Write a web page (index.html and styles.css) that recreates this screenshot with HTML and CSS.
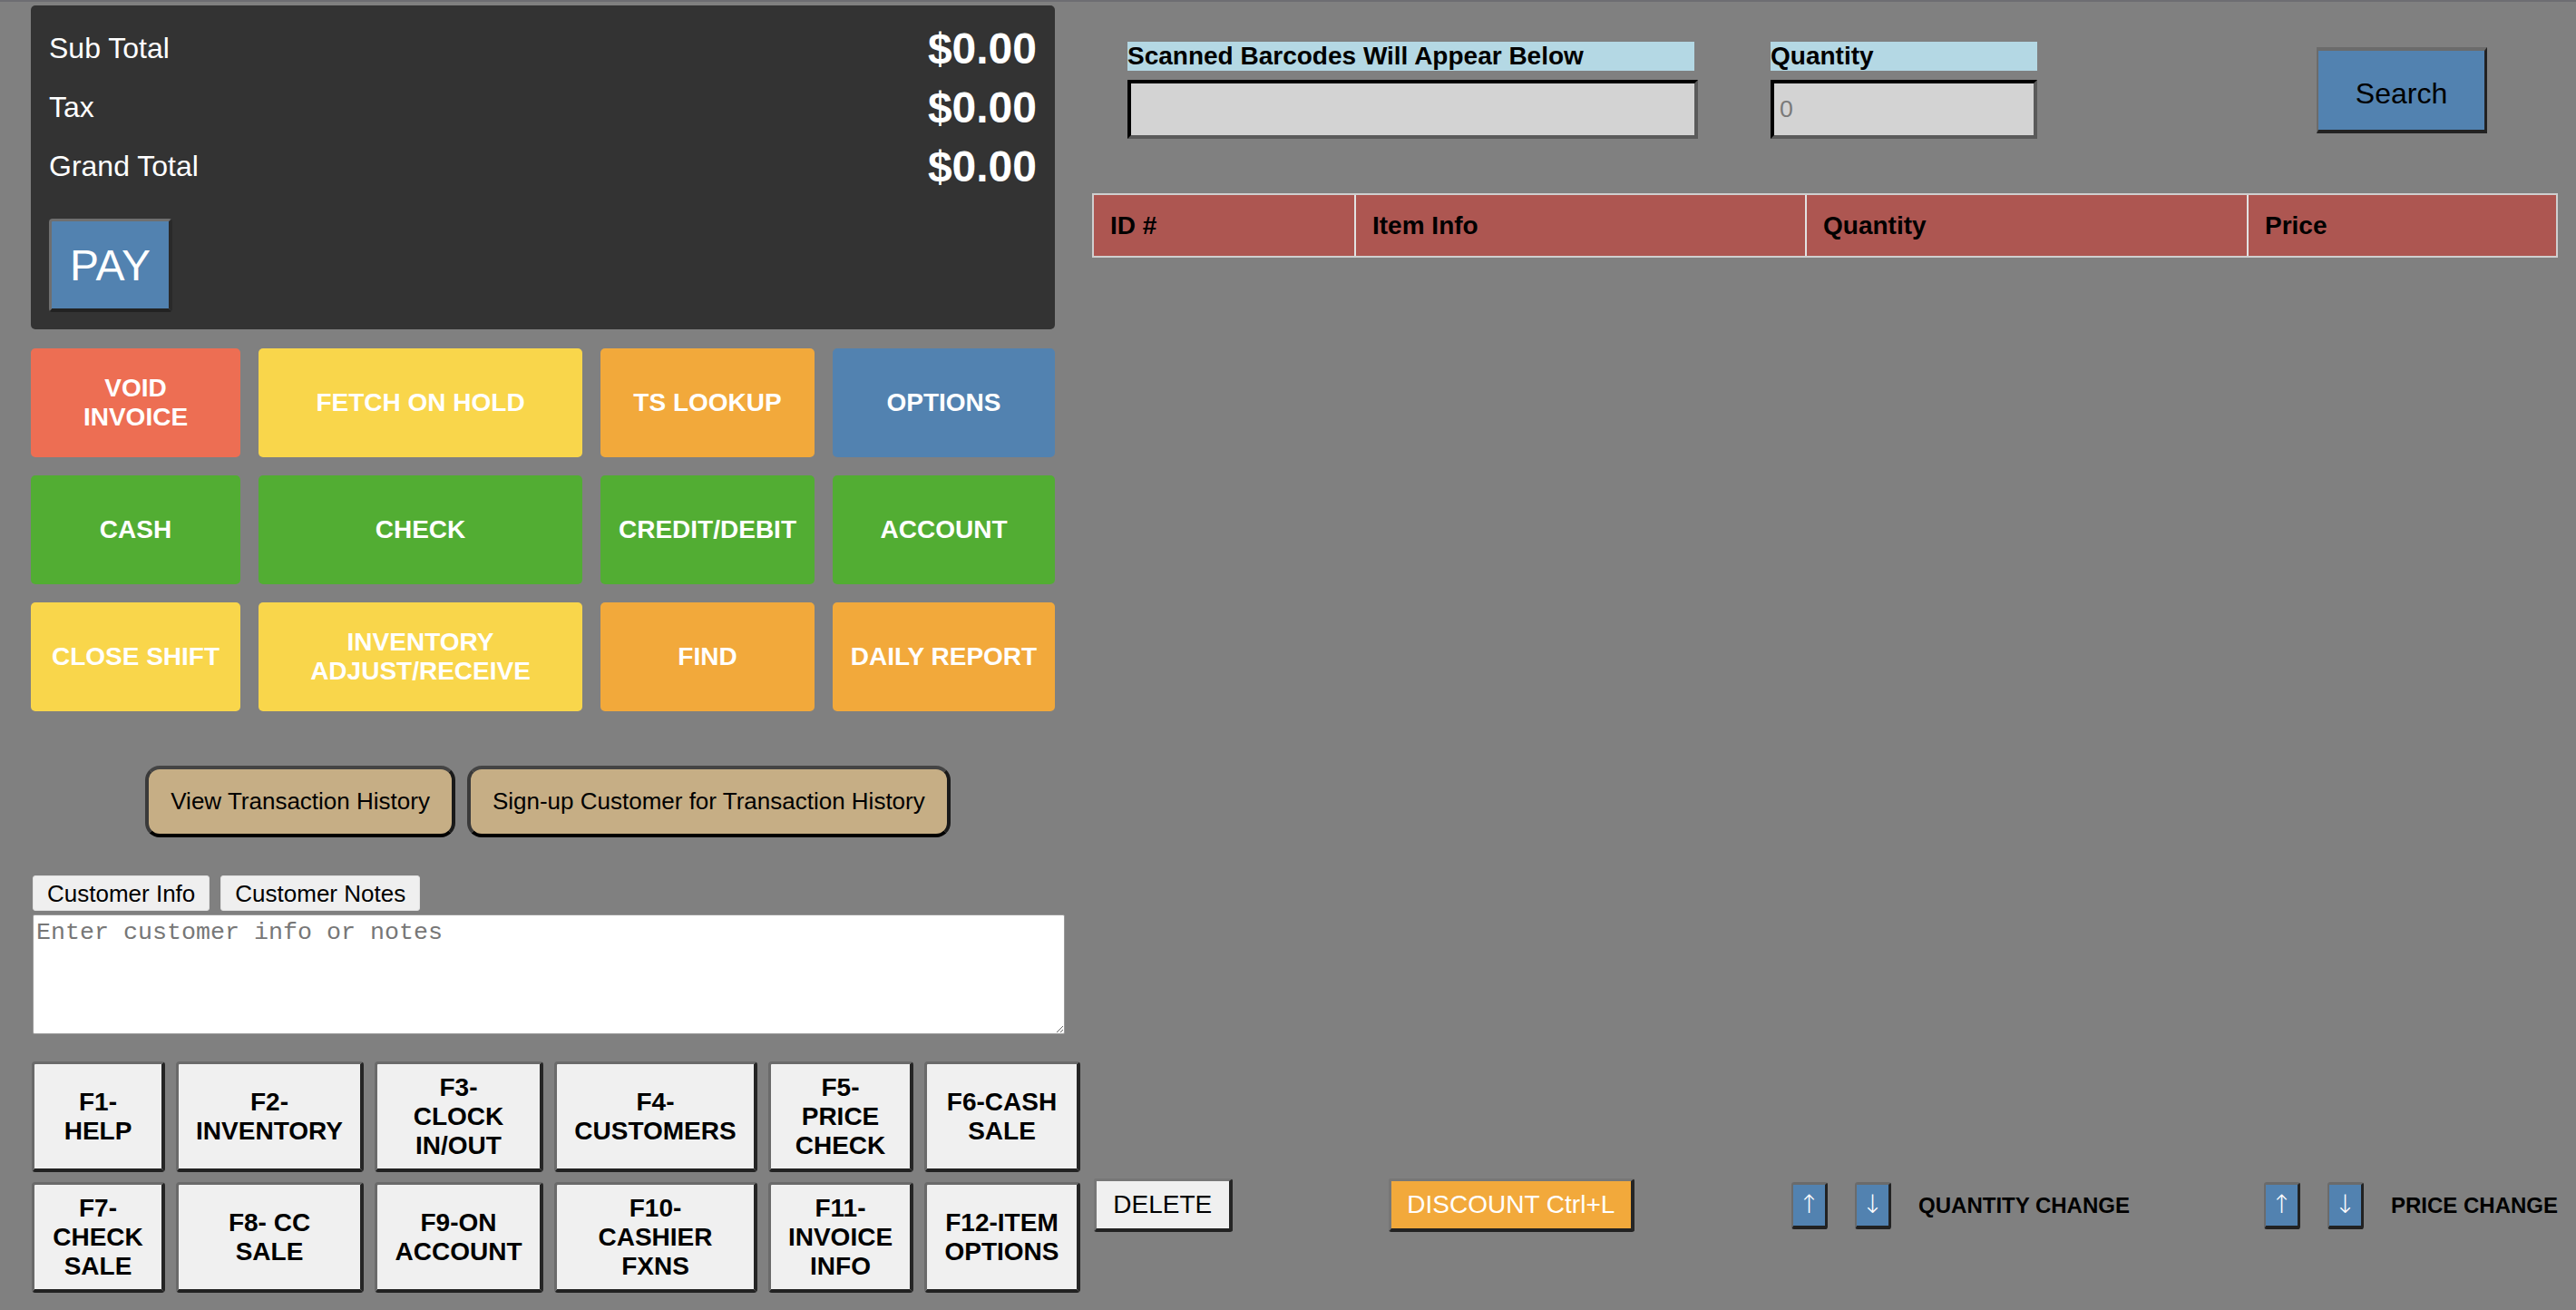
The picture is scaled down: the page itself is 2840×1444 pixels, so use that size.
FILE: index.html
```html
<!DOCTYPE html>
<html lang="en">
<head>
<meta charset="utf-8">
<title>Point of Sale</title>
<link rel="stylesheet" href="styles.css">
</head>
<body>
<div class="app">
  <div class="left">
    <section class="totals">
      <div class="total-row"><span class="total-label">Sub Total</span><span class="total-value">$0.00</span></div>
      <div class="total-row"><span class="total-label">Tax</span><span class="total-value">$0.00</span></div>
      <div class="total-row"><span class="total-label">Grand Total</span><span class="total-value">$0.00</span></div>
      <button class="pay-btn">PAY</button>
    </section>

    <div class="action-grid">
      <button class="tile tile-red">VOID<br>INVOICE</button>
      <button class="tile tile-yellow">FETCH ON HOLD</button>
      <button class="tile tile-orange">TS LOOKUP</button>
      <button class="tile tile-blue">OPTIONS</button>
      <button class="tile tile-green">CASH</button>
      <button class="tile tile-green">CHECK</button>
      <button class="tile tile-green">CREDIT/DEBIT</button>
      <button class="tile tile-green">ACCOUNT</button>
      <button class="tile tile-yellow">CLOSE SHIFT</button>
      <button class="tile tile-yellow">INVENTORY<br>ADJUST/RECEIVE</button>
      <button class="tile tile-orange">FIND</button>
      <button class="tile tile-orange">DAILY REPORT</button>
    </div>

    <div class="history-row">
      <button class="history-btn">View Transaction History</button>
      <button class="history-btn">Sign-up Customer for Transaction History</button>
    </div>

    <div class="tabs">
      <button class="tab">Customer Info</button>
      <button class="tab">Customer Notes</button>
    </div>
    <textarea class="notes" placeholder="Enter customer info or notes"></textarea>

    <div class="fkeys">
      <button class="fkey">F1-<br>HELP</button>
      <button class="fkey">F2-<br>INVENTORY</button>
      <button class="fkey">F3-<br>CLOCK<br>IN/OUT</button>
      <button class="fkey">F4-<br>CUSTOMERS</button>
      <button class="fkey">F5-<br>PRICE<br>CHECK</button>
      <button class="fkey">F6-CASH<br>SALE</button>
      <button class="fkey">F7-<br>CHECK<br>SALE</button>
      <button class="fkey">F8- CC<br>SALE</button>
      <button class="fkey">F9-ON<br>ACCOUNT</button>
      <button class="fkey">F10-<br>CASHIER<br>FXNS</button>
      <button class="fkey">F11-<br>INVOICE<br>INFO</button>
      <button class="fkey">F12-ITEM<br>OPTIONS</button>
    </div>
  </div>

  <div class="right">
    <div class="scan-row">
      <div class="field field-barcode">
        <label class="field-label">Scanned Barcodes Will Appear Below</label>
        <input class="field-input" type="text">
      </div>
      <div class="field field-qty">
        <label class="field-label">Quantity</label>
        <input class="field-input" type="text" placeholder="0">
      </div>
      <button class="search-btn">Search</button>
    </div>

    <div class="items">
      <table class="items-table">
        <thead>
          <tr>
            <th class="col-id">ID #</th>
            <th class="col-info">Item Info</th>
            <th class="col-qty">Quantity</th>
            <th class="col-price">Price</th>
          </tr>
        </thead>
        <tbody></tbody>
      </table>
    </div>

    <div class="bottom-row">
      <button class="btn-delete">DELETE</button>
      <button class="btn-discount">DISCOUNT Ctrl+L</button>
      <div class="adjust adjust-qty">
        <button class="arrow-btn">&#8593;</button>
        <button class="arrow-btn">&#8595;</button>
        <span class="adjust-label">QUANTITY CHANGE</span>
      </div>
      <div class="adjust adjust-price">
        <button class="arrow-btn">&#8593;</button>
        <button class="arrow-btn">&#8595;</button>
        <span class="adjust-label">PRICE CHANGE</span>
      </div>
    </div>
  </div>
</div>
</body>
</html>
```

FILE: styles.css
```css
* {
  box-sizing: border-box;
}

html, body {
  margin: 0;
  padding: 0;
}

body {
  background: #808080;
  border-top: 2px solid #6d6d72;
  font-family: "Liberation Sans", Arial, Helvetica, sans-serif;
  height: 1444px;
  overflow: hidden;
}

button, input, textarea {
  font-family: inherit;
  margin: 0;
}

button {
  cursor: pointer;
}

.app {
  display: flex;
  align-items: flex-start;
}

/* ---------- Left column ---------- */
.left {
  width: 1140px;
  margin-left: 34px;
  padding-top: 4px;
}

.totals {
  width: 1129px;
  height: 357px;
  background: #333333;
  border-radius: 5px;
  padding: 20px 20px 19px 20px;
}

.total-row {
  display: flex;
  justify-content: space-between;
  align-items: center;
  height: 55px;
  margin-bottom: 10px;
  color: #ffffff;
}

.total-label {
  font-size: 32px;
}

.total-value {
  font-size: 48px;
  font-weight: bold;
  line-height: 55px;
}

.pay-btn {
  display: block;
  margin-top: 30px;
  width: 136px;
  height: 103px;
  background: #5282b0;
  color: #ffffff;
  font-size: 48px;
  border-style: solid;
  border-width: 3px 4px 4px 3px;
  border-color: #6f6f6f #2a2a2a #222222 #6f6f6f;
  border-radius: 4px;
  padding: 0;
}

.action-grid {
  display: grid;
  grid-template-columns: 231px 357px 236px 245px;
  grid-auto-rows: 120px;
  column-gap: 20px;
  row-gap: 20px;
  margin-top: 21px;
  width: 1129px;
}

.tile {
  border: none;
  border-radius: 5px;
  color: #ffffff;
  font-size: 28px;
  font-weight: bold;
  line-height: 32px;
  padding: 0 6px;
  text-align: center;
}

.tile-red { background: #ed6e53; }
.tile-yellow { background: #f9d64b; }
.tile-orange { background: #f2a93b; }
.tile-blue { background: #5282b0; }
.tile-green { background: #52ad33; }

.history-row {
  display: flex;
  justify-content: center;
  gap: 13px;
  margin-top: 60px;
}

.history-btn {
  background: #c6ae85;
  color: #000000;
  font-size: 26px;
  line-height: 31px;
  padding: 20px 24px;
  border-style: solid;
  border-width: 4px;
  border-color: #444444 #1a1a1a #000000 #3a3a3a;
  border-radius: 16px;
}

.tabs {
  display: flex;
  gap: 12px;
  margin-top: 42px;
  margin-left: 2px;
}

.tab {
  height: 39px;
  background: #efefef;
  color: #000000;
  font-size: 26px;
  line-height: 30px;
  padding: 0 15px;
  border: 1px solid #e2e2e2;
  border-radius: 3px;
}

.notes {
  display: block;
  margin-top: 4px;
  margin-left: 2px;
  width: 1138px;
  height: 132px;
  background: #ffffff;
  border: 1px solid #9a9a9a;
  border-radius: 2px;
  padding: 4px 3px;
  font-family: "Liberation Mono", "Courier New", monospace;
  font-size: 26.67px;
  color: #000000;
}

.notes::placeholder {
  color: #777777;
}

.fkeys {
  display: grid;
  grid-template-columns: 147px 207px 186px 224px 160px 172px;
  grid-auto-rows: 122px;
  column-gap: 12px;
  row-gap: 11px;
  margin-top: 30px;
  margin-left: 1px;
  width: 1160px;
}

.fkey {
  background: #f0f0f0;
  color: #000000;
  font-size: 28px;
  font-weight: bold;
  line-height: 32px;
  text-align: center;
  padding: 0 4px;
  border-style: solid;
  border-width: 3px 4px 4px 3px;
  border-color: #6a6a6a #252525 #222222 #6a6a6a;
  border-radius: 4px;
}

/* ---------- Right column ---------- */
.right {
  width: 1616px;
  margin-left: 30px;
  display: flex;
  flex-direction: column;
}

.scan-row {
  display: flex;
  align-items: flex-start;
  margin-top: 44px;
  padding-left: 39px;
}

.field {
  display: flex;
  flex-direction: column;
}

.field-barcode {
  width: 629px;
}

.field-barcode .field-label {
  width: 625px;
}

.field-qty {
  width: 294px;
  margin-left: 80px;
}

.field-label {
  display: block;
  height: 32px;
  background: #b4d8e4;
  color: #000000;
  font-size: 28px;
  font-weight: bold;
  line-height: 32px;
  white-space: nowrap;
}

.field-input {
  margin-top: 10px;
  height: 65px;
  width: 100%;
  background: #d3d3d3;
  border-style: solid;
  border-width: 4px;
  border-color: #000000 #5a5a5a #5a5a5a #000000;
  padding: 0 6px;
  font-size: 26.67px;
  color: #000000;
}

.field-input::placeholder {
  color: #7a7a7a;
}

.search-btn {
  margin-left: 308px;
  margin-top: 6px;
  width: 188px;
  height: 95px;
  background: #5282b0;
  color: #000000;
  font-size: 32px;
  padding: 8px 0 0 0;
  border-style: solid;
  border-width: 4px 3px 4px 2px;
  border-color: #6b6b6b #222222 #222222 #6b6b6b;
}

.items {
  margin-top: 60px;
  height: 1086px;
}

.items-table {
  width: 1616px;
  border-collapse: separate;
  border-spacing: 0;
  border: 2px solid #cfcfcf;
  table-layout: fixed;
}

.items-table th {
  height: 67px;
  background: #ad5651;
  color: #000000;
  font-size: 28px;
  font-weight: bold;
  text-align: left;
  padding: 0 18px;
  border-left: 2px solid #e2e2e2;
}

.items-table th.col-id {
  border-left: none;
}

.col-id { width: 287px; }
.col-info { width: 497px; }
.col-qty { width: 487px; }
.col-price { width: 341px; }

.bottom-row {
  display: flex;
  align-items: center;
  height: 59px;
}

.btn-delete,
.btn-discount {
  height: 59px;
  font-size: 28px;
  padding: 0;
  border-style: solid;
  border-width: 3px 4px 4px 3px;
  border-color: #777777 #262626 #222222 #777777;
  border-radius: 3px;
}

.btn-delete {
  margin-left: 2px;
  width: 154px;
  background: #f0f0f0;
  color: #000000;
}

.btn-discount {
  margin-left: 172px;
  width: 274px;
  background: #f2a93b;
  color: #ffffff;
}

.adjust {
  display: flex;
  align-items: center;
  gap: 30px;
}

.adjust-qty {
  margin-left: 173px;
}

.adjust-price {
  margin-left: 148px;
}

.arrow-btn {
  width: 40px;
  height: 52px;
  background: #5282b0;
  color: #ffffff;
  font-family: "DejaVu Sans", "Liberation Sans", sans-serif;
  font-weight: 200;
  font-size: 28px;
  line-height: 1;
  padding: 0;
  border-style: solid;
  border-width: 3px 3px 4px 2px;
  border-color: #6b6b6b #222222 #222222 #6b6b6b;
  border-radius: 3px;
}

.adjust-label {
  font-size: 24px;
  font-weight: bold;
  color: #000000;
  white-space: nowrap;
}
```
